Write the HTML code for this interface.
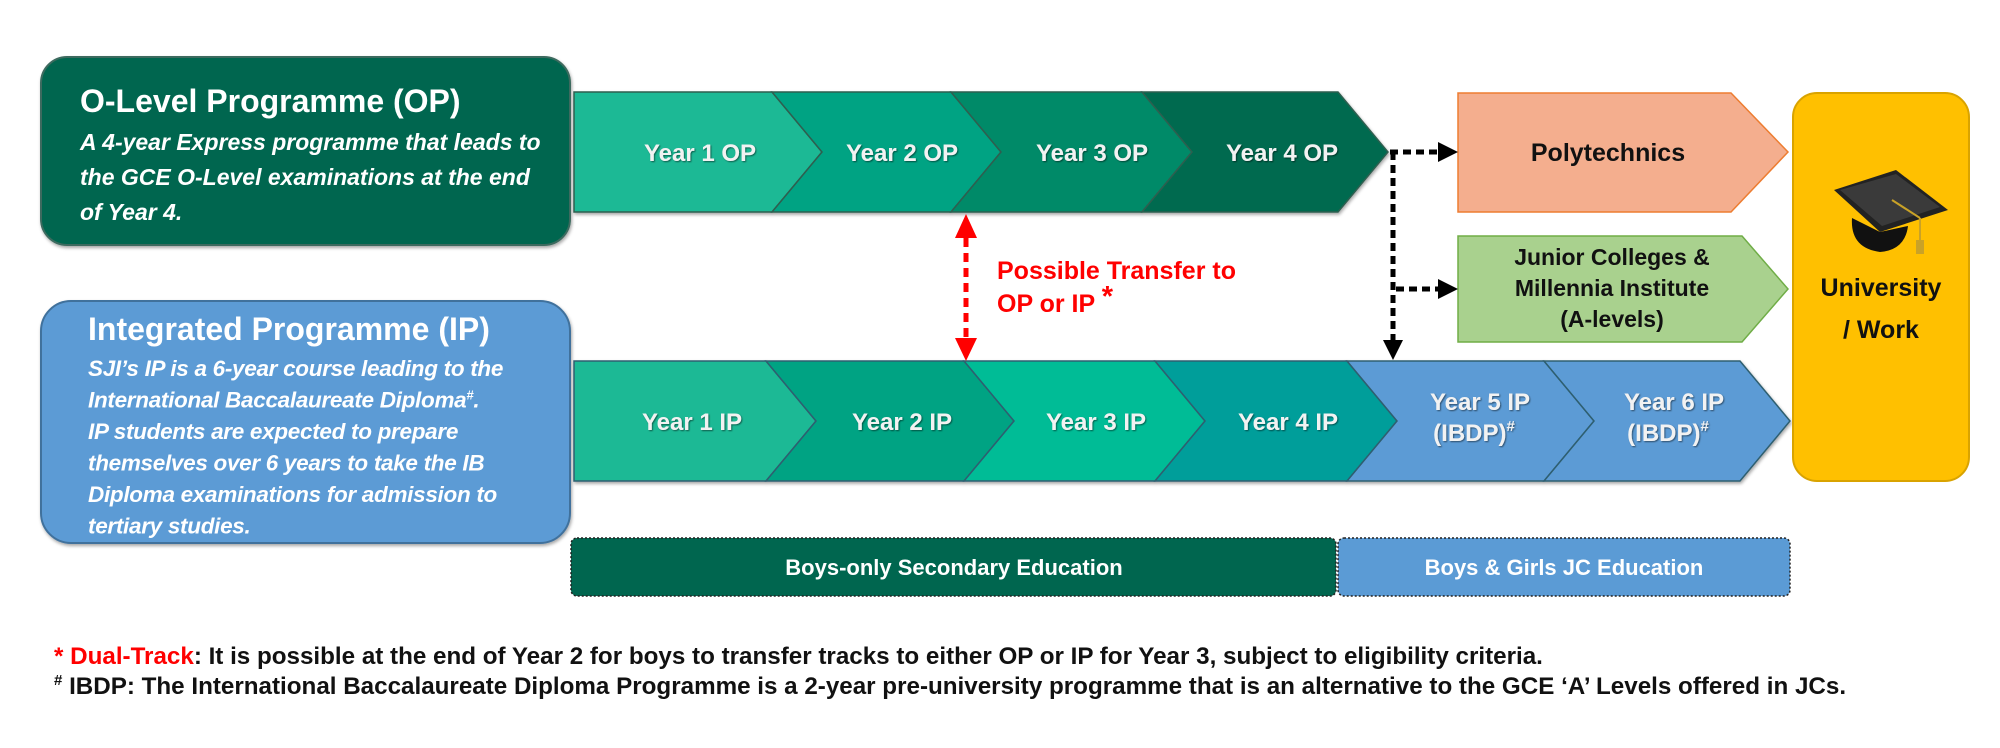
<!DOCTYPE html>
<html><head><meta charset="utf-8"><style>
body{margin:0;background:#fff;width:2000px;height:743px;overflow:hidden;font-family:"Liberation Sans",sans-serif}
text{font-family:"Liberation Sans",sans-serif;font-weight:bold}
</style></head><body>
<svg width="2000" height="743" viewBox="0 0 2000 743" xmlns="http://www.w3.org/2000/svg">
<defs>
<filter id="sh" x="-5%" y="-5%" width="110%" height="115%"><feDropShadow dx="1" dy="2" stdDeviation="1.5" flood-color="#000" flood-opacity="0.35"/></filter>
<filter id="ts"><feDropShadow dx="1" dy="1" stdDeviation="0.8" flood-color="#000" flood-opacity="0.5"/></filter>
</defs>
<rect x="41" y="57" width="529" height="188" rx="26" fill="#00664F" stroke="#3d6b5e" stroke-width="2" filter="url(#sh)"/>
<text x="80" y="112" font-size="32" fill="#fff">O-Level Programme (OP)</text>
<g font-size="23" fill="#fff" font-style="italic">
<text x="80" y="150">A 4-year Express programme that leads to</text>
<text x="80" y="185">the GCE O-Level examinations at the end</text>
<text x="80" y="220">of Year 4.</text>
</g>
<rect x="41" y="301" width="529" height="242" rx="30" fill="#5B9BD5" stroke="#41719C" stroke-width="2" filter="url(#sh)"/>
<text x="88" y="340" font-size="32" fill="#fff">Integrated Programme (IP)</text>
<g font-size="22.5" fill="#fff" font-style="italic" letter-spacing="-0.3">
<text x="88" y="376">SJI’s IP is a 6-year course leading to the</text>
<text x="88" y="407.5">International Baccalaureate Diploma<tspan font-size="13" dy="-8">#</tspan><tspan dy="8">.</tspan></text>
<text x="88" y="439">IP students are expected to prepare</text>
<text x="88" y="470.5">themselves over 6 years to take the IB</text>
<text x="88" y="502">Diploma  examinations for admission to</text>
<text x="88" y="533.5">tertiary studies.</text>
</g>
<g stroke="#2f5e50" stroke-width="1.5" filter="url(#sh)">
<polygon points="574,92 772,92 822,152 772,212 574,212" fill="#1DB995"/>
<polygon points="772,92 951,92 1001,152 951,212 772,212 822,152" fill="#00A383"/>
<polygon points="951,92 1142,92 1192,152 1142,212 951,212 1001,152" fill="#008A68"/>
<polygon points="1142,92 1338,92 1388,152 1338,212 1142,212 1192,152" fill="#006B50"/>
</g>
<g font-size="24" fill="#f2f2f2" text-anchor="middle" filter="url(#ts)">
<text x="700" y="161">Year 1 OP</text>
<text x="902" y="161">Year 2 OP</text>
<text x="1092" y="161">Year 3 OP</text>
<text x="1282" y="161">Year 4 OP</text>
</g>
<g stroke="#2f5e70" stroke-width="1.5" filter="url(#sh)">
<polygon points="574,361 766,361 816,421 766,481 574,481" fill="#1DB995"/>
<polygon points="766,361 964,361 1014,421 964,481 766,481 816,421" fill="#00A383"/>
<polygon points="964,361 1155,361 1205,421 1155,481 964,481 1014,421" fill="#00BC96"/>
<polygon points="1155,361 1347,361 1397,421 1347,481 1155,481 1205,421" fill="#009E9A"/>
<polygon points="1347,361 1544,361 1594,421 1544,481 1347,481 1397,421" fill="#5B9BD5"/>
<polygon points="1544,361 1740,361 1790,421 1740,481 1544,481 1594,421" fill="#5B9BD5"/>
</g>
<g font-size="24" fill="#f2f2f2" text-anchor="middle" filter="url(#ts)">
<text x="692" y="430">Year 1 IP</text>
<text x="902" y="430">Year 2 IP</text>
<text x="1096" y="430">Year 3 IP</text>
<text x="1288" y="430">Year 4 IP</text>
<text x="1480" y="410">Year 5 IP</text>
<text x="1474" y="441">(IBDP)<tspan font-size="15" dy="-10">#</tspan></text>
<text x="1674" y="410">Year 6 IP</text>
<text x="1668" y="441">(IBDP)<tspan font-size="15" dy="-10">#</tspan></text>
</g>
<polygon points="1458,93 1731,93 1788,152 1731,212 1458,212" fill="#F4AE8E" stroke="#ED7D31" stroke-width="1.5"/>
<text x="1608" y="161" font-size="25" fill="#111" text-anchor="middle">Polytechnics</text>
<polygon points="1458,236 1742,236 1788,289 1742,342 1458,342" fill="#A9D18E" stroke="#70AD47" stroke-width="1.5"/>
<g font-size="23" fill="#111" text-anchor="middle">
<text x="1612" y="265">Junior Colleges &amp;</text>
<text x="1612" y="296">Millennia Institute</text>
<text x="1612" y="327">(A-levels)</text>
</g>
<rect x="1793" y="93" width="176" height="388" rx="24" fill="#FFC000" stroke="#D9A300" stroke-width="2"/>
<g font-size="25" fill="#111" text-anchor="middle">
<text x="1881" y="296">University</text>
<text x="1881" y="338">/ Work</text>
</g>
<g>
<path d="M1852,218 Q1850,248 1880,252 Q1905,250 1908,226 L1880,232 Z" fill="#111"/>
<polygon points="1834,190 1896,170 1948,210 1880,232" fill="#222"/>
<polygon points="1840,190 1896,174 1940,207 1882,226" fill="#3a3a3a"/>
<line x1="1892" y1="200" x2="1920" y2="218" stroke="#c9a227" stroke-width="2"/>
<line x1="1920" y1="218" x2="1920" y2="246" stroke="#c9a227" stroke-width="2"/>
<rect x="1916" y="240" width="8" height="14" fill="#c9a227"/>
</g>
<g stroke="#000" stroke-width="5" stroke-dasharray="8,5" fill="none">
<line x1="1390" y1="152" x2="1440" y2="152"/>
<line x1="1393" y1="152" x2="1393" y2="342"/>
<line x1="1396" y1="289" x2="1440" y2="289"/>
</g>
<polygon points="1438,142 1458,152 1438,162" fill="#000"/>
<polygon points="1438,279 1458,289 1438,299" fill="#000"/>
<polygon points="1383,340 1403,340 1393,360" fill="#000"/>
<line x1="966" y1="238" x2="966" y2="338" stroke="#f00" stroke-width="5" stroke-dasharray="9,6"/>
<polygon points="955,238 977,238 966,214" fill="#f00"/>
<polygon points="955,338 977,338 966,361" fill="#f00"/>
<g font-size="25" fill="#f00">
<text x="997" y="279">Possible Transfer to</text>
<text x="997" y="312">OP or IP <tspan font-size="29" dy="-6">*</tspan></text>
</g>
<rect x="571" y="538" width="765" height="58" rx="6" fill="#00664F" stroke="#222" stroke-width="1.5" stroke-dasharray="2,2"/>
<rect x="1338" y="538" width="452" height="58" rx="6" fill="#5B9BD5" stroke="#222" stroke-width="1.5" stroke-dasharray="2,2"/>
<g font-size="22" fill="#fff" text-anchor="middle">
<text x="954" y="575">Boys-only Secondary Education</text>
<text x="1564" y="575">Boys &amp; Girls JC Education</text>
</g>
<g font-size="24.2" fill="#111">
<text x="54" y="664"><tspan fill="#f00">* Dual-Track</tspan>: It is possible at the end of Year 2 for boys to transfer tracks to either OP or IP for Year 3, subject to eligibility criteria.</text>
<text x="54" y="694"><tspan font-size="15" dy="-9">#</tspan><tspan dy="9"> IBDP: The International Baccalaureate Diploma Programme is a 2-year pre-university programme that is an alternative to the GCE ‘A’ Levels offered in JCs.</tspan></text>
</g>
</svg>
</body></html>
